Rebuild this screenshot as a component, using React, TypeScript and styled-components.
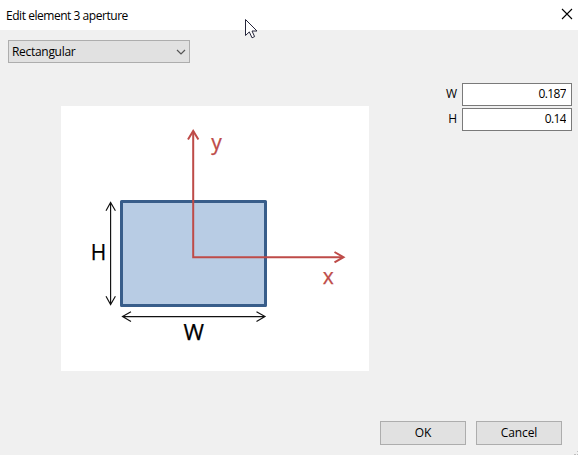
import React from "react";
import styled, { createGlobalStyle } from "styled-components";

const GlobalStyle = createGlobalStyle`
  body { margin: 0; overflow: hidden; }
  *, *::before, *::after { box-sizing: border-box; }
`;

const Dialog = styled.main`
  position: relative;
  display: flex;
  flex-direction: column;
  width: 578px;
  height: 455px;
  background: #f0f0f0;
  color: #000;
  font: 12px/16px "Open Sans", "Noto Sans", sans-serif;
  cursor: default;
`;

const TitleBar = styled.header`
  display: flex;
  align-items: center;
  justify-content: space-between;
  height: 30px;
  padding: 0 5px 0 6px;
  background: #fff;
`;

const Title = styled.h1`
  margin: 2px 0 0;
  font: inherit;
  letter-spacing: -0.46px;
`;

const CloseButton = styled.button`
  display: flex;
  width: 12px;
  height: 12px;
  margin-top: -3px;
  padding: 0;
  border: 0;
  background: transparent;
`;

const ShapeSelect = styled.button`
  display: flex;
  align-items: center;
  justify-content: space-between;
  width: 182px;
  height: 23px;
  margin: 10px 0 0 8px;
  padding: 0 3px;
  border: 1px solid #adadad;
  background: #e1e1e1;
  color: #000;
  font: inherit;
  letter-spacing: -0.3px;
`;

const Content = styled.section`
  display: flex;
  justify-content: space-between;
  margin-top: 20px;
  padding: 0 6px 0 61px;
`;

const DiagramPanel = styled.figure`
  width: 308px;
  height: 265px;
  margin: 23px 0 0;
  background: #fff;

  svg { display: block; }
`;

const Fields = styled.div`
  display: grid;
  grid-template-columns: auto 110px;
  grid-auto-rows: 23px;
  gap: 2px 5px;
  align-items: center;
  align-self: flex-start;
`;

const FieldLabel = styled.label`
  margin-top: -2px;
  text-align: right;
`;

const FieldInput = styled.input`
  width: 110px;
  height: 23px;
  padding: 0 5px 2px;
  border: 1px solid #7a7a7a;
  border-radius: 0;
  outline: 0;
  background: #fff;
  color: #000;
  font: inherit;
  letter-spacing: -0.6px;
  text-align: right;
`;

const Actions = styled.footer`
  display: flex;
  justify-content: flex-end;
  gap: 10px;
  margin-top: auto;
  padding: 0 16px 10px 0;
`;

const ActionButton = styled.button<{ $spacing?: number }>`
  width: 86px;
  height: 24px;
  padding: 0;
  border: 1px solid #adadad;
  background: #e1e1e1;
  color: #000;
  font: inherit;
  letter-spacing: ${({ $spacing = 0 }) => $spacing}px;
`;

const Pointer = styled.svg`
  position: absolute;
  left: 245px;
  top: 19px;
`;

const ResizeGrip = styled.svg`
  position: absolute;
  right: 0;
  bottom: 0;
`;

function ApertureDiagram() {
  return (
    <svg width="308" height="265" viewBox="61 106 308 265" fontFamily="Open Sans, Noto Sans, sans-serif">
      <rect x="121.5" y="201.5" width="144" height="104" fill="#b8cce4" stroke="#385d8a" strokeWidth="3" strokeLinejoin="round" />
      <g fill="none" stroke="#be4b48" strokeWidth="2">
        <path d="M193.2 131V257.2H343" />
        <path d="M188 139.5L193.2 131L198.4 139.5M334.5 252L343.5 257.2L334.5 262.4" />
      </g>
      <g fill="none" stroke="#111" strokeWidth="1.15">
        <path d="M110.6 202.5V304.5M106 210.8L110.6 202.5L115.4 210.8M106 296.2L110.6 304.5L115.4 296.2" />
        <path d="M122.5 316.6H265M131 311.8L122.5 316.6L131 321.4M256.5 311.8L265 316.6L256.5 321.4" />
      </g>
      <g fontSize="21" strokeWidth="0.25">
        <text x="90.7" y="260" stroke="#000" textLength="15.5" lengthAdjust="spacingAndGlyphs">H</text>
        <text x="183.5" y="340" stroke="#000" textLength="20.5" lengthAdjust="spacingAndGlyphs">W</text>
        <text x="211.3" y="149.5" fill="#be4b48" stroke="#be4b48">y</text>
        <text x="322.7" y="284" fill="#be4b48" stroke="#be4b48">x</text>
      </g>
    </svg>
  );
}

export default function App() {
  return (
    <>
      <GlobalStyle />
      <Dialog>
        <TitleBar>
          <Title>Edit element 3 aperture</Title>
          <CloseButton aria-label="Close">
            <svg width="12" height="12" viewBox="0 0 12 12" stroke="#000" strokeWidth="1.1">
              <path d="M1 1L11 11M11 1L1 11" />
            </svg>
          </CloseButton>
        </TitleBar>
        <ShapeSelect>
          Rectangular
          <svg width="10" height="6" viewBox="0 0 10 6" fill="none" stroke="#555" strokeWidth="1.2">
            <path d="M1 1L5 5L9 1" />
          </svg>
        </ShapeSelect>
        <Content>
          <DiagramPanel><ApertureDiagram /></DiagramPanel>
          <Fields>
            <FieldLabel htmlFor="width">W</FieldLabel>
            <FieldInput id="width" defaultValue="0.187" />
            <FieldLabel htmlFor="height">H</FieldLabel>
            <FieldInput id="height" defaultValue="0.14" />
          </Fields>
        </Content>
        <Actions>
          <ActionButton>OK</ActionButton>
          <ActionButton $spacing={-0.1}>Cancel</ActionButton>
        </Actions>
        <Pointer width="13" height="20" viewBox="0 0 13 20">
          <path d="M.5 .5V16.5L4.3 12.9L7 18.8L9.6 17.6L7 12H12Z" fill="#fff" stroke="#25253a" />
        </Pointer>
        <ResizeGrip width="4" height="4" viewBox="0 0 4 4" fill="#bfbfbf">
          <path d="M3 0H4V1H3ZM0 3H2V4H0ZM3 3H4V4H3Z" />
        </ResizeGrip>
      </Dialog>
    </>
  );
}
